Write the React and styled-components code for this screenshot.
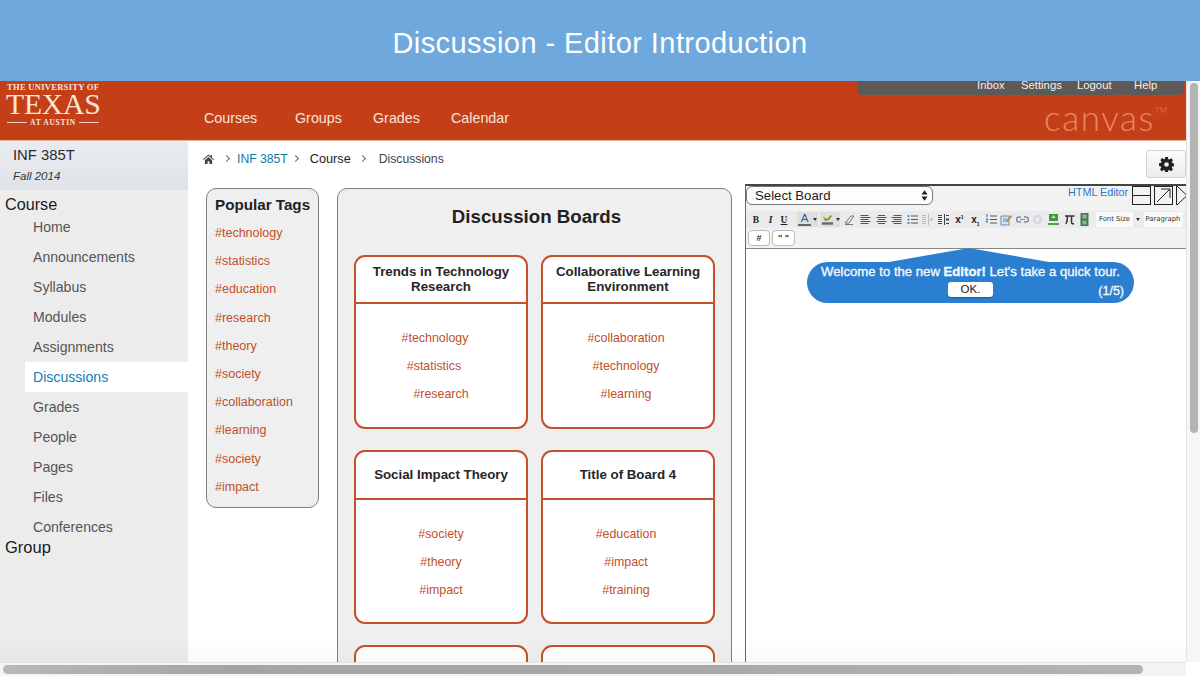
import React from "react";
import styled, { createGlobalStyle } from "styled-components";

const sideItems = ["Home", "Announcements", "Syllabus", "Modules", "Assignments", "Discussions", "Grades", "People", "Pages", "Files", "Conferences"];
const popularTags = ["technology", "statistics", "education", "research", "theory", "society", "collaboration", "learning", "society", "impact"];
const boards = [
  { title: "Trends in Technology Research", tags: [["technology", 12], ["statistics", 14], ["research", 0]] },
  { title: "Collaborative Learning Environment", tags: [["collaboration", 4], ["technology", 4], ["learning", 4]] },
  { title: "Social Impact Theory", tags: [["society", 0], ["theory", 0], ["impact", 0]] },
  { title: "Title of Board 4", tags: [["education", 4], ["impact", 4], ["training", 4]] },
  { title: "", tags: [] },
  { title: "", tags: [] },
];

export default function App() {
  return (
    <Page>
      <GlobalStyle />
      <Banner>Discussion - Editor Introduction</Banner>
      <Frame>
        <Viewport>
          <Header>
            <Logo>
              <LogoTop>THE UNIVERSITY OF</LogoTop>
              <LogoMain>TEXAS</LogoMain>
              <LogoBottom>AT AUSTIN</LogoBottom>
            </Logo>
            <Nav>
              <NavLink $w={91}>Courses</NavLink>
              <NavLink $w={78}>Groups</NavLink>
              <NavLink $w={78}>Grades</NavLink>
              <NavLink>Calendar</NavLink>
            </Nav>
            <Wordmark>canvas<sup>TM</sup></Wordmark>
            <UserMenu>
              <UserLink $w={44}>Inbox</UserLink>
              <UserLink $w={56}>Settings</UserLink>
              <UserLink $w={57}>Logout</UserLink>
              <UserLink>Help</UserLink>
            </UserMenu>
          </Header>
          <Body>
            <Sidebar>
              <CourseHead>
                <CourseName>INF 385T</CourseName>
                <CourseTerm>Fall 2014</CourseTerm>
              </CourseHead>
              <SideTitle>Course</SideTitle>
              <SideList>
                {sideItems.map((item) => (
                  <SideItem key={item} $active={item === "Discussions"}>{item}</SideItem>
                ))}
              </SideList>
              <GroupTitle>Group</GroupTitle>
            </Sidebar>
            <Content>
              <Crumbs>
                <HomeIcon viewBox="0 0 12 11">
                  <path d="M6 .5 0 5.8l.7.8L6 2l5.3 4.6.7-.8L9.8 3.9V1H8.3v1.5zM2 7v4h3V8h2v3h3V7L6 3.4z" fill="#444" />
                </HomeIcon>
                <Chevron $w={11} />
                <CrumbLink>INF 385T</CrumbLink>
                <Chevron $w={6} />
                <CrumbStrong>Course</CrumbStrong>
                <Chevron $w={10} />
                <Crumb>Discussions</Crumb>
                <GearButton>
                  <svg width="15" height="15" viewBox="0 0 16 16">
                    <path
                      fill="#222"
                      fillRule="evenodd"
                      d="M6.6 0h2.8l.4 2.2 1.2.5L12.9 1.400l2 2-1.300 1.900.5 1.200 2.200.4v2.800l-2.200.4-.5 1.200 1.300 1.900-2 2-1.900-1.300-1.200.5-.4 2.200H6.600l-.4-2.200-1.200-.5-1.900 1.300-2-2 1.300-1.900-.5-1.200L0 9.400V6.600l2.200-.4.5-1.200L1.400 3.100l2-2L5.300 2.400l1-.4zM8 5.500a2.500 2.500 0 1 0 0 5 2.500 2.500 0 0 0 0-5z"
                    />
                  </svg>
                </GearButton>
              </Crumbs>
              <Columns>
                <TagsPanel>
                  <TagsTitle>Popular Tags</TagsTitle>
                  {popularTags.map((tag, i) => (
                    <PopularTag key={i}>#{tag}</PopularTag>
                  ))}
                </TagsPanel>
                <BoardsPanel>
                  <BoardsTitle>Discussion Boards</BoardsTitle>
                  <BoardGrid>
                    {boards.map((board, i) => (
                      <Board key={i}>
                        <BoardHead $tall={i >= 2}>{board.title}</BoardHead>
                        <BoardBody>
                          {board.tags.map(([tag, shift]) => (
                            <BoardTag key={tag} $shift={shift}>#{tag}</BoardTag>
                          ))}
                        </BoardBody>
                      </Board>
                    ))}
                  </BoardGrid>
                </BoardsPanel>
                <Editor>
                  <EditorBar>
                    <EditorTop>
                      <BoardSelect>
                        Select Board
                        <SelectArrows viewBox="0 0 8 12">
                          <path d="M4 0 7.500 4.800H.5zM4 12 .5 7.200h7z" fill="#222" />
                        </SelectArrows>
                      </BoardSelect>
                      <HtmlLink>HTML Editor</HtmlLink>
                      <WinButton $w={19}>
                        <svg width="17" height="17" viewBox="0 0 17 17"><path d="M0 8.500h17" stroke="#222" fill="none" /></svg>
                      </WinButton>
                      <WinButton $w={19}>
                        <svg width="17" height="17" viewBox="0 0 17 17"><path d="M2 15 15 2M6 2h9v9" stroke="#222" fill="none" /></svg>
                      </WinButton>
                      <WinButton $w={13} $open>
                        <svg width="12" height="19" viewBox="0 0 12 19"><path d="M0 0 10 9.500 0 19" stroke="#222" fill="none" /></svg>
                      </WinButton>
                    </EditorTop>
                    <ToolRow>
                      <ToolText $w={16}>B</ToolText>
                      <ToolText $w={13} $italic>I</ToolText>
                      <ToolText $w={14} $under>U</ToolText>
                      <ColorBtn $w={21} $gap={6}>
                        <ColorA>A</ColorA>
                        <Caret />
                      </ColorBtn>
                      <ColorBtn $w={20} $gap={2}>
                        <svg width="13" height="13" viewBox="0 0 13 13">
                          <path d="M2 3.500 6 6l4-4 1 1-3 4-4 1z" fill="#8a9a20" />
                          <path d="M1 10.500h11" stroke="#666" strokeWidth="2.400" />
                        </svg>
                        <Caret />
                      </ColorBtn>
                      <EraserSlot>
                        <svg width="13" height="13" viewBox="0 0 13 13">
                          <path d="M2 10 8 3h3L6 10zM2 11.500h8" stroke="#777" fill="none" />
                        </svg>
                      </EraserSlot>
                      <ToolIcon><Lines d="M1.500 2.500h8M1.500 4.500h10M1.500 6.500h8M1.500 8.500h10M1.500 10.500h8" /></ToolIcon>
                      <ToolIcon><Lines d="M3 2.500h7M1.500 4.500h10M3 6.500h7M1.500 8.500h10M3 10.500h7" /></ToolIcon>
                      <ToolIcon><Lines d="M3.500 2.500h8M1.500 4.500h10M3.500 6.500h8M1.500 8.500h10M3.500 10.500h8" /></ToolIcon>
                      <ToolIcon>
                        <path d="M1.500 3h2M1.500 6.500h2M1.500 10h2" stroke="#2a6db0" fill="none" strokeWidth="1.400" />
                        <path d="M5 3h7M5 6.500h7M5 10h7" stroke="#555" fill="none" />
                      </ToolIcon>
                      <ToolIcon>
                        <path d="M1 2.500h4M1 4.500h4M1 6.500h4M1 8.500h4M1 10.500h4M7.500 1v11" stroke="#b8bcc0" fill="none" />
                        <path d="M9 6.500h3" stroke="#b8bcc0" fill="none" strokeWidth="2" />
                      </ToolIcon>
                      <ToolIcon>
                        <path d="M1 2.500h4M1 4.500h4M1 6.500h4M1 8.500h4M1 10.500h4M7.500 1v11M9 2.500h3M9 10.500h3" stroke="#444" fill="none" />
                        <path d="M9 6.500h3" stroke="#444" fill="none" strokeWidth="2" />
                      </ToolIcon>
                      <ToolScript $w={16}>x<sup>1</sup></ToolScript>
                      <ToolScript $w={16}>x<sub>1</sub></ToolScript>
                      <ToolIcon>
                        <path d="M2 1v3M1 6h2L1 9h2" stroke="#2a6db0" fill="none" />
                        <path d="M5 3h7M5 6.500h7M5 10h7" stroke="#555" fill="none" />
                      </ToolIcon>
                      <ToolIcon>
                        <path d="M1 3h8v9H1z" fill="#d8e6f4" stroke="#5b8fc0" />
                        <path d="M3 6h4M3 8h4" stroke="#5b8fc0" fill="none" />
                        <path d="m6 8 5-6 1.500 1-5 6z" fill="#c88a30" />
                      </ToolIcon>
                      <ToolIcon>
                        <path d="M5 4H3a2.500 2.500 0 0 0 0 5h2M8 4h2a2.500 2.500 0 0 1 0 5H8" stroke="#7d8ea8" fill="none" strokeWidth="1.500" />
                        <path d="M4 6.500h5" stroke="#7d8ea8" fill="none" />
                      </ToolIcon>
                      <ToolIcon>
                        <circle cx="6.500" cy="6.500" r="3.500" fill="none" stroke="#d6d8da" strokeWidth="2.500" />
                      </ToolIcon>
                      <ToolIcon>
                        <path d="M2 1h9v7H2z" fill="#3f9a3a" />
                        <path d="M4 5 6.500 2 9 5z" fill="#b9e0a0" />
                        <path d="M1 11h11" stroke="#5a9a50" strokeWidth="2" />
                      </ToolIcon>
                      <ToolIcon>
                        <path d="M2 3h9.500M4.500 3c0 3-.5 6-1.500 8M8.500 3v6.500c0 1 .8 1.500 2.500 1" stroke="#333" fill="none" strokeWidth="1.500" />
                      </ToolIcon>
                      <ToolIcon>
                        <path d="M2.500 0h8v13h-8z" fill="#3f7a4c" />
                        <path d="M4.500 1.500h4v4h-4zM4.500 7.500h4v4h-4z" fill="#8fb59a" />
                      </ToolIcon>
                      <ToolDrop $w={37}>Font Size</ToolDrop>
                      <DropCaret />
                      <ToolDrop $w={39}>Paragraph</ToolDrop>
                      <DropCaret />
                    </ToolRow>
                    <ChipRow>
                      <Chip>#</Chip>
                      <Chip>" "</Chip>
                    </ChipRow>
                  </EditorBar>
                  <TourBubble>
                    Welcome to the new <b>Editor!</b> Let's take a quick tour.
                    <OkButton>OK.</OkButton>
                    <TourStep>(1/5)</TourStep>
                  </TourBubble>
                </Editor>
              </Columns>
            </Content>
          </Body>
          <BottomFade />
        </Viewport>
        <VerticalTrack><VerticalThumb /></VerticalTrack>
        <HorizontalTrack><HorizontalThumb /></HorizontalTrack>
        <Corner />
      </Frame>
    </Page>
  );
}

function Lines({ d }) {
  return <path d={d} stroke="#555" fill="none" />;
}

function ToolIcon({ children }) {
  return (
    <IconSlot>
      <svg width="13" height="13" viewBox="0 0 13 13">{children}</svg>
    </IconSlot>
  );
}

const GlobalStyle = createGlobalStyle`
  html, body {
    margin: 0;
    padding: 0;
    background: #fff;
    overflow: hidden;
  }
  body {
    font-family: "Liberation Sans", Arial, sans-serif;
  }
`;

const Page = styled.div`
  width: 1200px;
  height: 676px;
  display: flex;
  flex-direction: column;
  overflow: hidden;
`;
const Banner = styled.div`
  height: 81px;
  flex: none;
  background: #6fa8dc;
  color: #fff;
  font-size: 29px;
  letter-spacing: 0.43px;
  line-height: 86px;
  text-align: center;
`;
const Frame = styled.div`
  flex: 1;
  min-height: 0;
  display: grid;
  grid-template-columns: 1186px 14px;
  grid-template-rows: 581px 14px;
`;
const Viewport = styled.div`
  display: flex;
  flex-direction: column;
  overflow: hidden;
  position: relative;
`;
const BottomFade = styled.div`
  position: absolute;
  left: 0;
  right: 0;
  bottom: 0;
  height: 22px;
  background: linear-gradient(rgba(0, 0, 0, 0), rgba(0, 0, 0, 0.025));
`;
const Header = styled.div`
  height: 59px;
  flex: none;
  background: #c43f17;
  border-bottom: 1px solid #e8b49c;
  display: flex;
  position: relative;
`;
const Logo = styled.div`
  width: 204px;
  flex: none;
  box-sizing: border-box;
  padding: 2px 0 0 7px;
  color: #f6e6da;
  font-family: "Liberation Serif", serif;
`;
const LogoTop = styled.div`
  font-size: 8.5px;
  font-weight: 700;
  letter-spacing: 0.3px;
  line-height: 9px;
`;
const LogoMain = styled.div`
  font-size: 29.7px;
  line-height: 25px;
  letter-spacing: -0.2px;
  margin-left: -1px;
`;
const LogoBottom = styled.div`
  width: 92px;
  margin-top: 1px;
  font-size: 7.5px;
  font-weight: 700;
  letter-spacing: 0.7px;
  line-height: 9px;
  display: flex;
  align-items: center;
  gap: 3px;
  &::before,
  &::after {
    content: "";
    flex: 1;
    height: 1px;
    background: #f0d0bc;
  }
`;
const Nav = styled.div`
  display: flex;
  padding-top: 29px;
`;
const NavLink = styled.div`
  width: ${(p) => (p.$w ? `${p.$w}px` : "auto")};
  color: #f5e4da;
  font-size: 14.3px;
  line-height: 17px;
`;
const Wordmark = styled.div`
  margin-left: auto;
  margin-right: 19px;
  padding-top: 17px;
  color: #e58a63;
  font-family: Lato, sans-serif;
  font-weight: 300;
  font-size: 35px;
  line-height: 38px;
  letter-spacing: 1.6px;
  sup {
    font-size: 8px;
    line-height: 0;
    vertical-align: 18px;
    letter-spacing: 0;
  }
`;
const UserMenu = styled.div`
  position: absolute;
  top: 0;
  left: 857px;
  width: 327px;
  height: 14px;
  box-sizing: border-box;
  padding-left: 120px;
  background: #5d5a58;
  border-radius: 0 0 5px 5px;
  display: flex;
  color: #f0f0f0;
  font-size: 11.3px;
  line-height: 9px;
`;
const UserLink = styled.div`
  width: ${(p) => (p.$w ? `${p.$w}px` : "auto")};
`;
const Body = styled.div`
  flex: 1;
  min-height: 0;
  display: flex;
`;
const Sidebar = styled.div`
  width: 188px;
  flex: none;
  background: #ececec;
`;
const CourseHead = styled.div`
  height: 49px;
  box-sizing: border-box;
  padding: 6px 0 0 13px;
  background: linear-gradient(#e9ecf0, #dfe3e9);
`;
const CourseName = styled.div`
  font-size: 14.8px;
  line-height: 17px;
  color: #2c2c2c;
`;
const CourseTerm = styled.div`
  margin-top: 5px;
  font-size: 11.5px;
  line-height: 14px;
  font-style: italic;
  color: #333;
`;
const SideTitle = styled.div`
  margin: 5px 0 0 5px;
  font-size: 16.2px;
  line-height: 18px;
  color: #1a1a1a;
`;
const SideList = styled.div`
  margin: -1px 0 0 25px;
`;
const SideItem = styled.div`
  height: 30px;
  padding-left: 8px;
  font-size: 14.1px;
  line-height: 30px;
  color: ${(p) => (p.$active ? "#0d7fb5" : "#555")};
  background: ${(p) => (p.$active ? "#fff" : "transparent")};
`;
const GroupTitle = styled.div`
  margin: -4px 0 0 5px;
  font-size: 16.5px;
  line-height: 18px;
  color: #1a1a1a;
`;
const Content = styled.div`
  flex: 1;
  min-width: 0;
  display: flex;
  flex-direction: column;
`;
const Crumbs = styled.div`
  height: 47px;
  flex: none;
  box-sizing: border-box;
  padding: 9px 0 0 15px;
  display: flex;
  align-items: flex-start;
  font-size: 12.2px;
  line-height: 17px;
`;
const HomeIcon = styled.svg`
  width: 11px;
  height: 10px;
  margin-top: 4px;
`;
const Chevron = styled.span`
  width: 6px;
  height: 17px;
  margin: 0 10px 0 ${(p) => p.$w}px;
  position: relative;
  &::before {
    content: "";
    position: absolute;
    top: 6px;
    left: -1px;
    width: 4px;
    height: 4px;
    border-top: 1.5px solid #666;
    border-right: 1.5px solid #666;
    transform: rotate(45deg);
  }
`;
const CrumbLink = styled.span`
  color: #0c7aa0;
  margin: 1px 0 0 -4px;
`;
const CrumbStrong = styled.span`
  color: #222;
  font-size: 12.7px;
  margin-top: 1px;
`;
const Crumb = styled.span`
  color: #444;
  margin: 1px 0 0 2px;
`;
const GearButton = styled.div`
  margin-left: auto;
  width: 40px;
  height: 28px;
  box-sizing: border-box;
  border: 1px solid #d4d4d4;
  border-radius: 3px;
  background: linear-gradient(#fbfbfb, #ececec);
  display: flex;
  align-items: center;
  justify-content: center;
`;
const Columns = styled.div`
  flex: 1;
  min-height: 0;
  display: flex;
  align-items: flex-start;
  padding-left: 18px;
`;
const TagsPanel = styled.div`
  width: 113px;
  height: 320px;
  flex: none;
  box-sizing: border-box;
  padding: 6px 0 0 8px;
  background: #efefef;
  border: 1px solid #808080;
  border-radius: 10px;
`;
const TagsTitle = styled.div`
  font-size: 15.2px;
  font-weight: 700;
  line-height: 20px;
  color: #222;
  margin-bottom: 4px;
`;
const PopularTag = styled.div`
  height: 28.2px;
  font-size: 12.5px;
  line-height: 28px;
  color: #bf4f2b;
`;
const BoardsPanel = styled.div`
  width: 395px;
  height: 500px;
  flex: none;
  margin-left: 18px;
  box-sizing: border-box;
  padding: 0 16px;
  background: #efefef;
  border: 1px solid #808080;
  border-radius: 10px 10px 0 0;
`;
const BoardsTitle = styled.div`
  height: 66px;
  padding-left: 4px;
  font-size: 18.7px;
  font-weight: 700;
  line-height: 55px;
  text-align: center;
  color: #222;
`;
const BoardGrid = styled.div`
  display: grid;
  grid-template-columns: 174px 174px;
  grid-auto-rows: 174px;
  column-gap: 13px;
  row-gap: 21px;
`;
const Board = styled.div`
  box-sizing: border-box;
  background: #fff;
  border: 2px solid #c4502c;
  border-radius: 11px;
  display: flex;
  flex-direction: column;
`;
const BoardHead = styled.div`
  height: ${(p) => (p.$tall ? "48px" : "47px")};
  flex: none;
  box-sizing: border-box;
  border-bottom: 2px solid #c4502c;
  display: flex;
  align-items: center;
  justify-content: center;
  padding: 0 10px 1px;
  text-align: center;
  font-size: 13.3px;
  font-weight: 700;
  line-height: 15px;
  color: #262626;
`;
const BoardBody = styled.div`
  padding-top: 20px;
`;
const BoardTag = styled.div`
  height: 28px;
  padding-right: ${(p) => p.$shift}px;
  text-align: center;
  font-size: 12.4px;
  line-height: 28px;
  color: #bf4f2b;
`;
const Editor = styled.div`
  width: 441px;
  height: 478px;
  flex: none;
  margin: -4px 0 0 13px;
  box-sizing: border-box;
  border-left: 1px solid #666;
  border-top: 2px solid #444;
  position: relative;
  overflow: hidden;
`;
const EditorBar = styled.div`
  height: 63px;
  box-sizing: border-box;
  background: #f2f2f2;
  border-bottom: 1px solid #888;
`;
const EditorTop = styled.div`
  height: 25px;
  display: flex;
  align-items: flex-start;
`;
const BoardSelect = styled.div`
  width: 187px;
  height: 19px;
  flex: none;
  box-sizing: border-box;
  padding: 0 4px 0 8px;
  background: #fdfdfd;
  border: 1px solid #777;
  border-radius: 6px;
  display: flex;
  align-items: center;
  justify-content: space-between;
  font-size: 13.2px;
  color: #1c1c1c;
`;
const SelectArrows = styled.svg`
  width: 7px;
  height: 11px;
`;
const HtmlLink = styled.div`
  margin: 0 0 0 135px;
  width: 64px;
  flex: none;
  font-size: 10.8px;
  line-height: 12px;
  color: #2f78c8;
`;
const WinButton = styled.div`
  width: ${(p) => p.$w}px;
  height: 19px;
  flex: none;
  box-sizing: border-box;
  margin-right: 3px;
  border: ${(p) => (p.$open ? "none" : "1px solid #222")};
  ${(p) => p.$open && "border-left: 1px solid #222;"}
  svg {
    display: block;
  }
`;
const ToolRow = styled.div`
  height: 17px;
  padding-left: 2px;
  background: #ebebeb;
  display: flex;
  align-items: center;
  overflow: hidden;
  white-space: nowrap;
`;
const ToolText = styled.span`
  width: ${(p) => p.$w}px;
  flex: none;
  font-family: "Liberation Serif", serif;
  font-weight: 700;
  font-size: 9.5px;
  font-style: ${(p) => (p.$italic ? "italic" : "normal")};
  text-decoration: ${(p) => (p.$under ? "underline" : "none")};
  color: #222;
  text-align: center;
`;
const ColorBtn = styled.span`
  width: ${(p) => p.$w}px;
  height: 15px;
  flex: none;
  box-sizing: border-box;
  background: #dedede;
  margin-left: ${(p) => p.$gap}px;
  display: flex;
  align-items: center;
  padding-left: 1px;
  gap: 2px;
`;
const ColorA = styled.span`
  width: 13px;
  border-bottom: 2px solid #666;
  text-align: center;
  font-size: 11.5px;
  line-height: 11px;
  color: #1f5fa8;
`;
const Caret = styled.span`
  width: 0;
  height: 0;
  border-left: 2px solid transparent;
  border-right: 2px solid transparent;
  border-top: 3px solid #333;
`;
const IconSlot = styled.span`
  width: 15.6px;
  flex: none;
  display: flex;
  justify-content: center;
  svg {
    display: block;
  }
`;
const EraserSlot = styled(IconSlot)`
  margin-left: 2.2px;
`;
const ToolScript = styled.span`
  width: ${(p) => p.$w}px;
  flex: none;
  text-align: center;
  font-weight: 700;
  font-size: 10px;
  line-height: 12px;
  color: #222;
  sup,
  sub {
    font-size: 5px;
    line-height: 0;
  }
`;
const ToolDrop = styled.span`
  width: ${(p) => p.$w}px;
  height: 15px;
  flex: none;
  margin-left: 3.5px;
  background: #fafafa;
  font-family: "DejaVu Sans", sans-serif;
  font-size: 6.8px;
  line-height: 15px;
  color: #333;
  text-align: center;
  overflow: hidden;
`;
const DropCaret = styled(Caret)`
  flex: none;
  margin-left: 3px;
`;
const ChipRow = styled.div`
  display: flex;
  gap: 2px;
  padding: 2px 0 0 2px;
`;
const Chip = styled.div`
  width: 23px;
  height: 16px;
  &:first-child {
    width: 22px;
  }
  box-sizing: border-box;
  background: #fff;
  border: 1px solid #bbb;
  border-radius: 4px;
  text-align: center;
  font-size: 9px;
  font-weight: 700;
  line-height: 14px;
  color: #333;
`;
const TourBubble = styled.div`
  position: absolute;
  top: 76px;
  left: 61px;
  width: 327px;
  height: 41px;
  box-sizing: border-box;
  padding-top: 1px;
  background: #2a7fd0;
  border-radius: 21px;
  text-align: center;
  color: #f4f8fc;
  font-size: 13.15px;
  line-height: 17px;
  -webkit-text-stroke: 0.35px #f4f8fc;
  &::before {
    content: "";
    position: absolute;
    top: -14px;
    left: 82px;
    border-left: 80px solid transparent;
    border-right: 80px solid transparent;
    border-bottom: 14px solid #2a7fd0;
  }
`;
const OkButton = styled.div`
  width: 45px;
  height: 15px;
  margin: 2px auto 0;
  background: #fff;
  border-radius: 3px;
  box-shadow: 0 1px 1px #1a5a98;
  color: #222;
  font-size: 11.5px;
  line-height: 15px;
  -webkit-text-stroke: 0;
`;
const TourStep = styled.div`
  position: absolute;
  right: 10px;
  bottom: 4px;
  font-size: 12.5px;
  line-height: 16px;
`;
const VerticalTrack = styled.div`
  background: #f6f6f6;
  border-left: 1px solid #e4e4e4;
  box-sizing: border-box;
  padding: 2px 2px 0 3px;
`;
const VerticalThumb = styled.div`
  height: 350px;
  background: #b4b4b4;
  border-radius: 5px;
`;
const HorizontalTrack = styled.div`
  background: #f4f4f4;
  border-top: 1px solid #e2e2e2;
  box-sizing: border-box;
  padding: 2px 0 0 3px;
`;
const HorizontalThumb = styled.div`
  width: 1140px;
  height: 9px;
  background: linear-gradient(90deg, #b8b8b8, #a4a4a4 20%, #a8a8a8 60%, #b4b4b4);
  border-radius: 5px;
`;
const Corner = styled.div`
  background: #fff;
`;
